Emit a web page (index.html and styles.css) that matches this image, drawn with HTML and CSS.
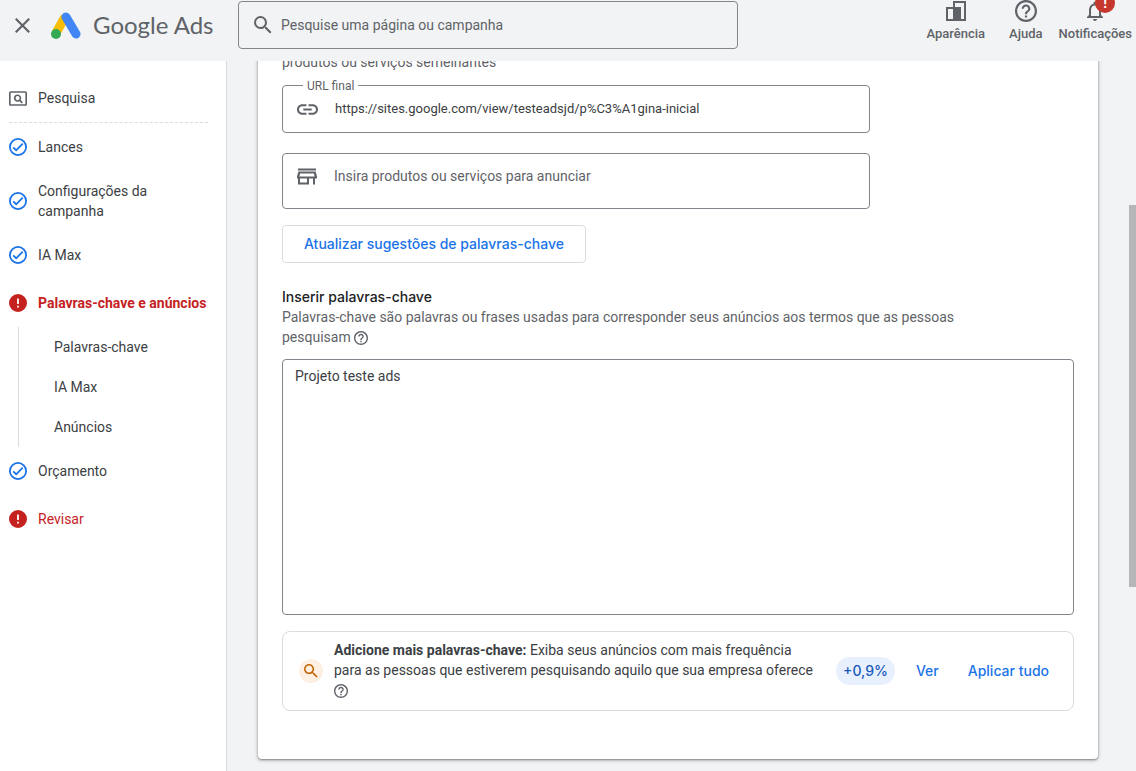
FILE: index.html
```html
<!DOCTYPE html>
<html lang="pt-BR">
<head>
  <meta charset="UTF-8">
  <meta name="viewport" content="width=device-width, initial-scale=1.0">
  <title>Palavras-chave e anúncios - Google Ads</title>
  <link rel="stylesheet" href="styles.css">
</head>
<body>

<!-- Shared icons -->
<svg class="sprite" aria-hidden="true">
  <symbol id="icon-check" viewBox="2 2 20 20">
    <path d="M12 2a10 10 0 1 0 0 20 10 10 0 0 0 0-20zm0 18a8 8 0 1 1 0-16 8 8 0 0 1 0 16zm4.600-12.400L10 14.200l-2.600-2.600L6 13l4 4 8-8z"/>
  </symbol>
  <symbol id="icon-error" viewBox="2 2 20 20">
    <path d="M12 2a10 10 0 1 0 0 20 10 10 0 0 0 0-20zm1 15h-2v-2h2v2zm0-4h-2V7h2v6z"/>
  </symbol>
  <symbol id="icon-help" viewBox="2 2 20 20">
    <path d="M11 18h2v-2h-2v2zm1-16C6.480 2 2 6.480 2 12s4.480 10 10 10 10-4.480 10-10S17.520 2 12 2zm0 18c-4.410 0-8-3.590-8-8s3.590-8 8-8 8 3.590 8 8-3.590 8-8 8zm0-14c-2.210 0-4 1.790-4 4h2c0-1.100.9-2 2-2s2 .9 2 2c0 2-3 1.750-3 5h2c0-2.250 3-2.500 3-5 0-2.210-1.790-4-4-4z"/>
  </symbol>
  <symbol id="icon-search" viewBox="3 3 18 18">
    <path d="M15.500 14h-.79l-.28-.27A6.471 6.471 0 0 0 16 9.500 6.500 6.500 0 1 0 9.500 16c1.610 0 3.090-.59 4.230-1.570l.27.280v.79l5 4.990L20.490 19l-4.990-5zm-6 0C7.010 14 5 11.990 5 9.500S7.010 5 9.500 5 14 7.010 14 9.500 11.990 14 9.500 14z"/>
  </symbol>
</svg>

<!-- Header -->
<header class="header">
  <button class="close-btn" type="button" aria-label="Fechar">
    <svg viewBox="5 5 14 14"><path d="M19 6.410L17.590 5 12 10.590 6.410 5 5 6.410 10.590 12 5 17.590 6.410 19 12 13.410 17.590 19 19 17.590 13.410 12z"/></svg>
  </button>
  <a class="brand" href="#">
    <svg class="brand-logo" viewBox="0 0 30 27" aria-hidden="true">
      <path d="M14 5L5 21" stroke="#fbbc04" stroke-width="9"/>
      <path d="M15 5L25 22" stroke="#4285f4" stroke-width="9" stroke-linecap="round"/>
      <circle cx="5" cy="22" r="5" fill="#34a853"/>
    </svg>
    <span>Google Ads</span>
  </a>
  <div class="search">
    <svg aria-hidden="true"><use href="#icon-search"/></svg>
    <input type="text" aria-label="Pesquisar" placeholder="Pesquise uma página ou campanha">
  </div>
  <div class="header-actions">
    <button class="appearance" type="button">
      <svg viewBox="1 1 22 22"><path d="M9 2h13v20H2V8h7V2zm2 2v4h6v12h3V4h-9zM4 10v10h5V10H4z"/></svg>
      <span>Aparência</span>
    </button>
    <button type="button">
      <svg><use href="#icon-help"/></svg>
      <span>Ajuda</span>
    </button>
    <button class="notifications" type="button">
      <svg viewBox="1 1 22 22"><path d="M12 22c1.100 0 2-.9 2-2h-4c0 1.100.9 2 2 2zm6-6v-5c0-3.070-1.630-5.640-4.500-6.320V4a1.500 1.500 0 0 0-3 0v.68C7.640 5.360 6 7.920 6 11v5l-2 2v1h16v-1l-2-2zm-2 1H8v-6c0-2.480 1.510-4.500 4-4.500s4 2.020 4 4.500v6z"/></svg>
      <span>Notificações</span>
      <b class="badge">!</b>
    </button>
  </div>
</header>

<div class="page">

  <!-- Sidebar -->
  <nav class="sidebar">
    <a class="campaign-type" href="#">
      <svg viewBox="1 3 22 18"><path d="M21 3H3c-1.100 0-2 .9-2 2v14c0 1.100.9 2 2 2h18c1.100 0 2-.9 2-2V5c0-1.100-.9-2-2-2zm0 16H3V5h18v14z"/><path d="M11.500 7a4.500 4.500 0 1 0 2.300 8.300l2.700 2.700 1.500-1.500-2.700-2.700A4.500 4.500 0 0 0 11.500 7zm0 2a2.500 2.500 0 1 1 0 5 2.500 2.500 0 0 1 0-5z"/></svg>
      Pesquisa
    </a>
    <a class="done" href="#"><svg><use href="#icon-check"/></svg>Lances</a>
    <a class="done" href="#"><svg><use href="#icon-check"/></svg>Configurações da campanha</a>
    <a class="done" href="#"><svg><use href="#icon-check"/></svg>IA Max</a>
    <a class="error active" href="#"><svg><use href="#icon-error"/></svg>Palavras-chave e anúncios</a>
    <div class="submenu">
      <a href="#">Palavras-chave</a>
      <a href="#">IA Max</a>
      <a href="#">Anúncios</a>
    </div>
    <a class="done" href="#"><svg><use href="#icon-check"/></svg>Orçamento</a>
    <a class="error" href="#"><svg><use href="#icon-error"/></svg>Revisar</a>
  </nav>

  <!-- Main Content -->
  <main class="main-content">
    <div class="card">
      <p class="intro">produtos ou serviços semelhantes</p>

      <div class="field">
        <label for="final-url">URL final</label>
        <svg class="link-icon" viewBox="2 7 20 10" aria-hidden="true"><path d="M3.900 12c0-1.710 1.390-3.100 3.100-3.100h4V7H7c-2.760 0-5 2.240-5 5s2.240 5 5 5h4v-1.900H7c-1.710 0-3.100-1.390-3.100-3.100zM8 13h8v-2H8v2zm9-6h-4v1.900h4c1.710 0 3.100 1.390 3.100 3.100s-1.390 3.100-3.100 3.100h-4V17h4c2.760 0 5-2.240 5-5s-2.240-5-5-5z"/></svg>
        <input type="text" id="final-url" value="https://sites.google.com/view/testeadsjd/p%C3%A1gina-inicial">
      </div>

      <div class="field products">
        <svg class="store-icon" viewBox="2 4 20 16" aria-hidden="true"><path d="M3 4h18v2H3zM18.960 9l.6 3H4.440l.6-3h13.920M20.600 7H3.400L2 12v2h1v6h11v-6h4v6h2v-6h2v-2l-1.400-5zM5 18v-4h7v4H5z"/></svg>
        <input type="text" aria-label="Produtos ou serviços" placeholder="Insira produtos ou serviços para anunciar">
      </div>

      <button class="update-btn" type="button">Atualizar sugestões de palavras-chave</button>

      <h2><label for="keywords">Inserir palavras-chave</label></h2>
      <p class="description">Palavras-chave são palavras ou frases usadas para corresponder seus anúncios aos termos que as pessoas pesquisam <svg class="help-icon"><use href="#icon-help"/></svg></p>
      <textarea id="keywords">Projeto teste ads</textarea>

      <!-- Recommendation -->
      <section class="suggestion">
        <div class="suggestion-icon"><svg><use href="#icon-search"/></svg></div>
        <p><b>Adicione mais palavras-chave:</b> Exiba seus anúncios com mais frequência <br>para as pessoas que estiverem pesquisando aquilo que sua empresa oferece <br><svg class="help-icon"><use href="#icon-help"/></svg></p>
        <span class="score">+0,9%</span>
        <button type="button">Ver</button>
        <button type="button">Aplicar tudo</button>
      </section>
    </div>
  </main>

  <!-- Scrollbar -->
  <div class="scrollbar"><div class="thumb"></div></div>
</div>

</body>
</html>
```
FILE: styles.css
```css
/* Base Styles */
* {
  margin: 0;
  padding: 0;
  box-sizing: border-box;
}

body {
  display: flex;
  flex-direction: column;
  height: 100vh;
  overflow: hidden;
  background: #f1f3f4;
  color: #3c4043;
  font-family: Roboto, sans-serif;
  font-size: 14px;
  line-height: 20px;
}

a {
  color: inherit;
  text-decoration: none;
}

button,
input,
textarea {
  border: none;
  outline: none;
  background: none;
  color: inherit;
  font: inherit;
}

button {
  cursor: pointer;
}

svg {
  flex-shrink: 0;
  fill: currentColor;
}

.sprite {
  display: none;
}

/* Header */
.header {
  display: flex;
  align-items: flex-start;
  flex-shrink: 0;
  height: 61px;
  padding: 0 4px 0 15px;
  color: #5f6368;
}

.close-btn {
  display: flex;
  align-items: center;
  height: 50px;
}

.close-btn svg {
  width: 15px;
  height: 15px;
}

.brand {
  display: flex;
  align-items: center;
  gap: 12px;
  width: 187px;
  height: 50px;
  margin-left: 21px;
  font-family: Lato, sans-serif;
  font-size: 24px;
  white-space: nowrap;
}

.brand-logo {
  width: 30px;
  height: 27px;
  fill: none;
}

.search {
  display: flex;
  align-items: center;
  gap: 9px;
  flex: 0 1 500px;
  height: 48px;
  margin-top: 1px;
  padding: 0 15px;
  border: 1px solid #80868b;
  border-radius: 4px;
}

.search svg {
  width: 18px;
  height: 18px;
}

.search input {
  flex: 1;
}

input::placeholder {
  color: #5f6368;
  opacity: 1;
}

.header-actions {
  display: flex;
  gap: 16px;
  margin-left: auto;
}

.header-actions button {
  display: flex;
  flex-direction: column;
  align-items: center;
  gap: 2px;
  font-size: 13px;
  font-weight: 500;
}

.header-actions svg {
  width: 22px;
  height: 22px;
}

.header-actions .appearance {
  margin-right: 8px;
}

.notifications {
  position: relative;
}

.badge {
  position: absolute;
  top: -7px;
  left: 50%;
  width: 20px;
  height: 20px;
  border-radius: 50%;
  background: #c5372c;
  color: white;
  font-size: 14px;
}

/* Page */
.page {
  display: flex;
  flex: 1;
  min-height: 0;
}

/* Sidebar */
.sidebar {
  width: 227px;
  flex-shrink: 0;
  padding: 13px 0 0 9px;
  border-right: 1px solid #dadce0;
  background: white;
}

.sidebar a {
  display: flex;
  align-items: center;
  gap: 11px;
  min-height: 48px;
  padding: 10px 14px 10px 0;
}

.sidebar svg {
  width: 18px;
  height: 18px;
}

.sidebar .campaign-type {
  min-height: 49px;
  margin-right: 18px;
  border-bottom: 1px dashed #dadce0;
}

.campaign-type svg {
  height: 15px;
  color: #5f6368;
}

.done svg {
  color: #1a73e8;
}

.sidebar .error {
  color: #c5221f;
}

.sidebar .active {
  padding-right: 0;
  font-weight: bold;
}

.submenu {
  margin-left: 9px;
  padding-left: 35px;
  border-left: 1px solid #dadce0;
}

.submenu a {
  min-height: 40px;
}

/* Main Content */
.main-content {
  flex: 1;
  overflow: hidden;
  padding: 0 31px;
}

.card {
  margin-top: -33px;
  padding: 24px 24px 48px;
  border-radius: 4px;
  background: white;
  box-shadow: 0 1px 2px rgba(60, 64, 67, 0.5), 0 1px 4px rgba(60, 64, 67, 0.3);
}

.intro {
  margin-bottom: 13px;
  color: #5f6368;
}

.field {
  position: relative;
  display: flex;
  align-items: center;
  width: 588px;
  max-width: 100%;
  height: 48px;
  margin-bottom: 20px;
  padding: 0 14px;
  border: 1px solid #80868b;
  border-radius: 4px;
}

.field label {
  position: absolute;
  top: -10px;
  left: 20px;
  padding: 0 4px;
  background: white;
  color: #5f6368;
  font-size: 12px;
}

.field svg {
  color: #5f6368;
}

.field input {
  flex: 1;
  margin-left: 17px;
  font-size: 13px;
}

.link-icon {
  width: 21px;
  height: 11px;
}

.store-icon {
  width: 20px;
  height: 17px;
}

.field.products {
  height: 56px;
  margin-bottom: 16px;
  padding-bottom: 10px;
}

.field.products input {
  font-size: 14px;
}

.update-btn {
  display: block;
  height: 38px;
  margin-bottom: 24px;
  padding: 0 21px;
  border: 1px solid #dadce0;
  border-radius: 4px;
}

.update-btn,
.score,
.suggestion button {
  color: #1a73e8;
  font-family: Inter, sans-serif;
  font-weight: 500;
}

h2 {
  color: #202124;
  font-family: Inter, sans-serif;
  font-size: 14px;
  font-weight: 500;
}

.description {
  max-width: 720px;
  margin-bottom: 12px;
  color: #5f6368;
}

.help-icon {
  width: 14px;
  height: 14px;
  color: #5f6368;
  vertical-align: middle;
}

textarea {
  display: block;
  width: 100%;
  height: 256px;
  margin-bottom: 16px;
  padding: 6px 12px;
  border: 1px solid #80868b;
  border-radius: 4px;
  resize: none;
}

/* Suggestion */
.suggestion {
  display: flex;
  align-items: center;
  min-height: 80px;
  padding: 7px 24px 7px 16px;
  border: 1px solid #dadce0;
  border-radius: 8px;
}

.suggestion-icon {
  display: flex;
  align-items: center;
  justify-content: center;
  flex-shrink: 0;
  width: 24px;
  height: 24px;
  border-radius: 50%;
  background: #feefe3;
  color: #c26401;
}

.suggestion-icon svg {
  width: 14px;
  height: 14px;
}

.suggestion p {
  flex: 1;
  margin-left: 11px;
  padding-bottom: 2px;
}

.score {
  margin-right: 12px;
  padding: 4px 7px;
  border-radius: 14px;
  background: #e8f0fe;
  color: #185abc;
}

.suggestion button {
  margin-left: 9px;
  margin-right: 20px;
}

.suggestion button:last-child {
  margin-right: 0;
}

/* Scrollbar */
.scrollbar {
  width: 7px;
  padding-top: 144px;
}

.thumb {
  height: 382px;
  background: #b4b6b8;
}
```
